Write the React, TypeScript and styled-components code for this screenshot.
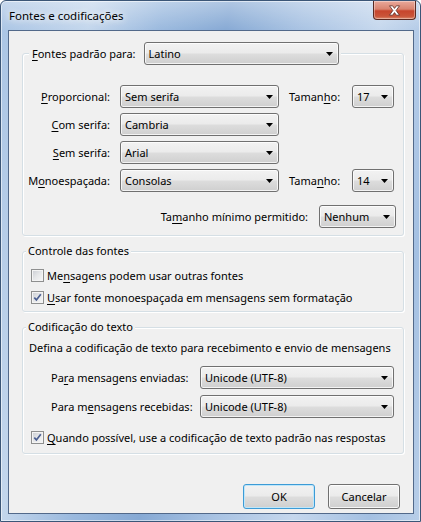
import React from 'react';
import styled, { createGlobalStyle } from 'styled-components';

const GlobalStyle = createGlobalStyle`
  html, body { margin: 0; padding: 0; background: #ffffff; }
  body {
    font-family: "Noto Sans", "Open Sans", sans-serif;
    font-size: 11px;
    color: #000;
  }
  * { box-sizing: border-box; }
`;

const Window = styled.div`
  width: 421px;
  height: 522px;
  display: flex;
  flex-direction: column;
  border: 1px solid #3b5677;
  border-radius: 6px 6px 0 0;
  background:
    linear-gradient(180deg, rgba(255,255,255,0.35) 0%, rgba(255,255,255,0) 30px),
    linear-gradient(100deg, #a9c4e4 0%, #c3d6ec 18%, #9ab9de 32%, #86a9d4 45%, #a9c3e3 60%, #c5d7ed 75%, #a4c0e2 90%, #b8cee8 100%);
  box-shadow: inset 0 0 0 1px rgba(255,255,255,0.55);
`;

const TitleBar = styled.div`
  height: 29px;
  display: flex;
  align-items: flex-start;
  justify-content: space-between;
`;

const Title = styled.div`
  padding: 7px 0 0 8px;
  font-size: 11.5px;
  line-height: 16px;
  color: #000;
  text-shadow: 0 0 6px rgba(255,255,255,0.95), 0 0 10px rgba(255,255,255,0.8);
`;

const CloseButton = styled.div`
  width: 43px;
  height: 19px;
  margin-right: 4px;
  border: 1px solid #5a2a22;
  border-top: none;
  border-radius: 0 0 4px 4px;
  background: linear-gradient(180deg, #e9a99b 0%, #d98470 45%, #c7452d 55%, #c9553a 85%, #dc8a6e 100%);
  box-shadow: inset 0 0 0 1px rgba(255,255,255,0.35);
  display: flex;
  align-items: center;
  justify-content: center;
`;

const Client = styled.div`
  flex: 1;
  margin: 0 6px 7px 7px;
  border: 1px solid #52698a;
  background: #f0f0f0;
  display: flex;
  flex-direction: column;
  padding: 11px 9px 4px 13px;
`;

const Group = styled.fieldset<{ $gap?: number }>`
  margin: ${p => p.$gap ?? 0}px 0 0 0;
  padding: 0;
  min-width: 0;
  border: 1px solid #d5dfe5;
  border-radius: 3px;
  box-shadow: inset 1px 1px 0 #ffffff, 1px 1px 0 #ffffff;
`;

const Legend = styled.legend<{ $indent: number }>`
  margin-left: ${p => p.$indent}px;
  padding: 0 2px;
  background: #f0f0f0;
  line-height: 16px;
  display: flex;
  align-items: center;
  gap: 8px;
  white-space: nowrap;
`;

const Key = styled.span`
  text-decoration: underline;
  text-underline-offset: 2px;
`;

const Combo = styled.div<{ $w: number }>`
  width: ${p => p.$w}px;
  height: 23px;
  border: 1px solid #707070;
  border-radius: 3px;
  background: linear-gradient(180deg, #f2f2f2 0%, #ebebeb 48%, #dddddd 52%, #cfcfcf 100%);
  box-shadow: inset 0 0 0 1px rgba(255,255,255,0.75);
  display: flex;
  align-items: center;
  justify-content: space-between;
  padding: 0 5px 0 4px;
  line-height: 16px;
  white-space: nowrap;
`;

const Arrow = () => (
  <svg width="7" height="4" viewBox="0 0 7 4" style={{ display: 'block' }}>
    <path d="M0 0 H7 L3.5 4 Z" fill="#000" />
  </svg>
);

const Select = ({ w, value }: { w: number; value: string }) => (
  <Combo $w={w}>
    <span>{value}</span>
    <Arrow />
  </Combo>
);

const FontGrid = styled.div`
  display: grid;
  grid-template-columns: 87px 159px 53px 42px;
  column-gap: 10px;
  row-gap: 5px;
  align-items: center;
  padding-top: 20px;
`;

const RowLabel = styled.div`
  grid-column-start: 1;
  text-align: right;
  white-space: nowrap;
`;

const SizeLabel = styled.div`
  white-space: nowrap;
`;

const MinRow = styled.div`
  display: flex;
  justify-content: flex-end;
  align-items: center;
  gap: 11px;
  margin-top: 13px;
  padding: 0 7px 7px 0;
  white-space: nowrap;
`;

const CheckList = styled.div<{ $top: number; $bottom: number }>`
  display: flex;
  flex-direction: column;
  gap: 6px;
  padding: ${p => p.$top}px 0 ${p => p.$bottom}px 8px;
`;

const CheckRow = styled.label`
  display: flex;
  align-items: center;
  gap: 3px;
  height: 16px;
  white-space: nowrap;
`;

const Box = styled.span`
  width: 13px;
  height: 13px;
  flex: none;
  border: 1px solid #8e8f8f;
  background: linear-gradient(135deg, #c9ccd2 0%, #e6e7e9 50%, #f7f7f7 100%);
  box-shadow: inset 0 0 0 1px #f4f4f4;
  display: flex;
  align-items: center;
  justify-content: center;
`;

const Check = ({ on }: { on?: boolean }) => (
  <Box>
    {on && (
      <svg width="9" height="9" viewBox="0 0 9 9" style={{ display: 'block' }}>
        <path d="M1.3 4.6 L3.4 6.9 L7.8 1.2" fill="none" stroke="#4b5f92" strokeWidth="1.7" />
      </svg>
    )}
  </Box>
);

const Intro = styled.div`
  padding: 5px 0 0 6px;
  line-height: 16px;
  white-space: nowrap;
`;

const EncGrid = styled.div`
  display: grid;
  grid-template-columns: 139px 194px;
  column-gap: 10px;
  row-gap: 6px;
  align-items: center;
  padding: 10px 0 0 28px;
  white-space: nowrap;
`;

const Footer = styled.div`
  margin-top: auto;
  display: flex;
  justify-content: flex-end;
  gap: 13px;
  padding-right: 4px;
`;

const Button = styled.div<{ $default?: boolean }>`
  width: 72px;
  height: 25px;
  border: 1px solid ${p => (p.$default ? '#3c9bd6' : '#707070')};
  border-radius: 3px;
  background: linear-gradient(180deg, #f2f2f2 0%, #ebebeb 48%, #dddddd 52%, #cfcfcf 100%);
  box-shadow: inset 0 0 0 1px ${p => (p.$default ? '#bfe6f9' : 'rgba(255,255,255,0.8)')};
  display: flex;
  align-items: center;
  justify-content: center;
  line-height: 16px;
`;

export default function App() {
  return (
    <>
      <GlobalStyle />
      <Window>
        <TitleBar>
          <Title>Fontes e codificações</Title>
          <CloseButton>
            <svg width="13" height="11" viewBox="0 0 13 11" style={{ display: 'block' }}>
              <path
                d="M1.5 0.8 H4.6 L6.5 3.4 L8.4 0.8 H11.5 L8.1 5.5 L11.5 10.2 H8.4 L6.5 7.6 L4.6 10.2 H1.5 L4.9 5.5 Z"
                fill="#ffffff"
                stroke="#5b2b22"
                strokeWidth="0.8"
                strokeLinejoin="round"
              />
            </svg>
          </CloseButton>
        </TitleBar>
        <Client>
          <Group>
            <Legend $indent={6}>
              <span style={{ paddingLeft: 1 }}>
                <Key>F</Key>ontes padrão para:
              </span>
              <Select w={195} value="Latino" />
            </Legend>
            <FontGrid>
              <RowLabel><Key>P</Key>roporcional:</RowLabel>
              <Select w={159} value="Sem serifa" />
              <SizeLabel>Taman<Key>h</Key>o:</SizeLabel>
              <Select w={42} value="17" />
              <RowLabel><Key>C</Key>om serifa:</RowLabel>
              <Select w={159} value="Cambria" />
              <RowLabel><Key>S</Key>em serifa:</RowLabel>
              <Select w={159} value="Arial" />
              <RowLabel>M<Key>o</Key>noespaçada:</RowLabel>
              <Select w={159} value="Consolas" />
              <SizeLabel>Tama<Key>n</Key>ho:</SizeLabel>
              <Select w={42} value="14" />
            </FontGrid>
            <MinRow>
              <span>Ta<Key>m</Key>anho mínimo permitido:</span>
              <Select w={77} value="Nenhum" />
            </MinRow>
          </Group>

          <Group $gap={7}>
            <Legend $indent={3}>Controle das fontes</Legend>
            <CheckList $top={8} $bottom={6}>
              <CheckRow>
                <Check />
                <span>Me<Key>n</Key>sagens podem usar outras fontes</span>
              </CheckRow>
              <CheckRow>
                <Check on />
                <span><Key>U</Key>sar fonte monoespaçada em mensagens sem formatação</span>
              </CheckRow>
            </CheckList>
          </Group>

          <Group $gap={7}>
            <Legend $indent={3}>Codificação do texto</Legend>
            <Intro>Defina a codificação de texto para recebimento e envio de mensagens</Intro>
            <EncGrid>
              <span>Pa<Key>r</Key>a mensagens enviadas:</span>
              <Select w={194} value="Unicode (UTF-8)" />
              <span>Para m<Key>e</Key>nsagens recebidas:</span>
              <Select w={194} value="Unicode (UTF-8)" />
            </EncGrid>
            <CheckList $top={11} $bottom={8}>
              <CheckRow>
                <Check on />
                <span><Key>Q</Key>uando possível, use a codificação de texto padrão nas respostas</span>
              </CheckRow>
            </CheckList>
          </Group>

          <Footer>
            <Button $default>OK</Button>
            <Button>Cancelar</Button>
          </Footer>
        </Client>
      </Window>
    </>
  );
}
